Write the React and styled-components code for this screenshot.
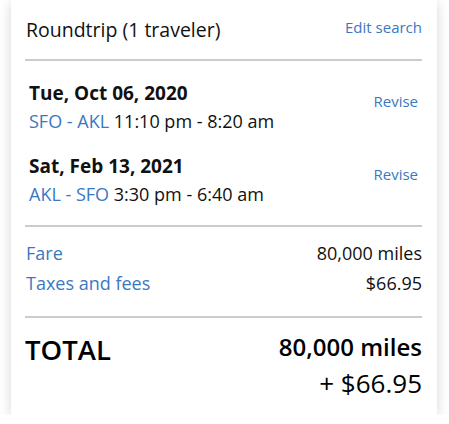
import React from "react";
import styled, { createGlobalStyle } from "styled-components";

const Global = createGlobalStyle`
  html, body { margin: 0; padding: 0; background: #ffffff; }
  body { font-family: "Open Sans", "Noto Sans", sans-serif; color: #111; }
`;

const Card = styled.div`
  box-sizing: border-box;
  width: 426px;
  margin-left: 11px;
  padding: 0 15px 0 14px;
  background: #fff;
  box-shadow: 0 2px 12px rgba(0, 0, 0, 0.16);
`;

const Section = styled.div`
  display: flex;
  flex-direction: column;
  gap: ${(p) => p.$gap || 0}px;
  padding: ${(p) => p.$pad};
  border-bottom: ${(p) => (p.$last ? "none" : "2px solid #cccccc")};
`;

const Row = styled.div`
  display: flex;
  justify-content: space-between;
  align-items: flex-start;
`;

const Title = styled.div`
  font-size: 19.5px;
  line-height: 24px;
  color: #111;
  padding-left: 1px;
`;

const Link = styled.a`
  font-size: 15px;
  line-height: 17px;
  color: #3a78c2;
  text-decoration: none;
  margin-top: ${(p) => p.$mt || 0}px;
  margin-right: ${(p) => p.$mr || 0}px;
`;

const Leg = styled.div`
  display: flex;
  flex-direction: column;
  padding-left: 4px;
`;

const DateLine = styled.div`
  font-size: 19px;
  font-weight: 700;
  line-height: 28px;
  color: #111;
`;

const Route = styled.div`
  font-size: 18px;
  line-height: 28px;
  color: #111;
`;

const Blue = styled.span`
  color: #3a78c2;
`;

const Label = styled.div`
  font-size: 18px;
  line-height: 30px;
  color: #3a78c2;
  padding-left: 1px;
`;

const Value = styled.div`
  font-size: 18px;
  line-height: 30px;
  color: #111;
`;

const TotalLabel = styled.div`
  font-size: 27.5px;
  font-weight: 600;
  line-height: 36px;
  margin-top: 3px;
  color: #000;
`;

const TotalValues = styled.div`
  display: flex;
  flex-direction: column;
  align-items: flex-end;
`;

const Miles = styled.div`
  font-size: 24px;
  font-weight: 600;
  line-height: 36px;
  color: #000;
`;

const Cash = styled.div`
  font-size: 26px;
  line-height: 36px;
  color: #000;
`;

const legs = [
  { date: "Tue, Oct 06, 2020", route: "SFO - AKL", time: "11:10 pm - 8:20 am" },
  { date: "Sat, Feb 13, 2021", route: "AKL - SFO", time: "3:30 pm - 6:40 am" },
];

export default function App() {
  return (
    <>
      <Global />
      <Card>
        <Section $pad="18px 0 17px 0">
          <Row>
            <Title>Roundtrip (1 traveler)</Title>
            <Link href="#" $mt={1}>Edit search</Link>
          </Row>
        </Section>
        <Section $pad="18px 0 17px 0" $gap={17}>
          {legs.map((l) => (
            <Row key={l.date}>
              <Leg>
                <DateLine>{l.date}</DateLine>
                <Route>
                  <Blue>{l.route}</Blue> {l.time}
                </Route>
              </Leg>
              <Link href="#" $mt={14} $mr={4}>Revise</Link>
            </Row>
          ))}
        </Section>
        <Section $pad="11px 0 18px 0">
          <Row>
            <Label>Fare</Label>
            <Value>80,000 miles</Value>
          </Row>
          <Row>
            <Label>Taxes and fees</Label>
            <Value>$66.95</Value>
          </Row>
        </Section>
        <Section $pad="11px 0 14px 0" $last>
          <Row>
            <TotalLabel>TOTAL</TotalLabel>
            <TotalValues>
              <Miles>80,000 miles</Miles>
              <Cash>+ $66.95</Cash>
            </TotalValues>
          </Row>
        </Section>
      </Card>
    </>
  );
}
